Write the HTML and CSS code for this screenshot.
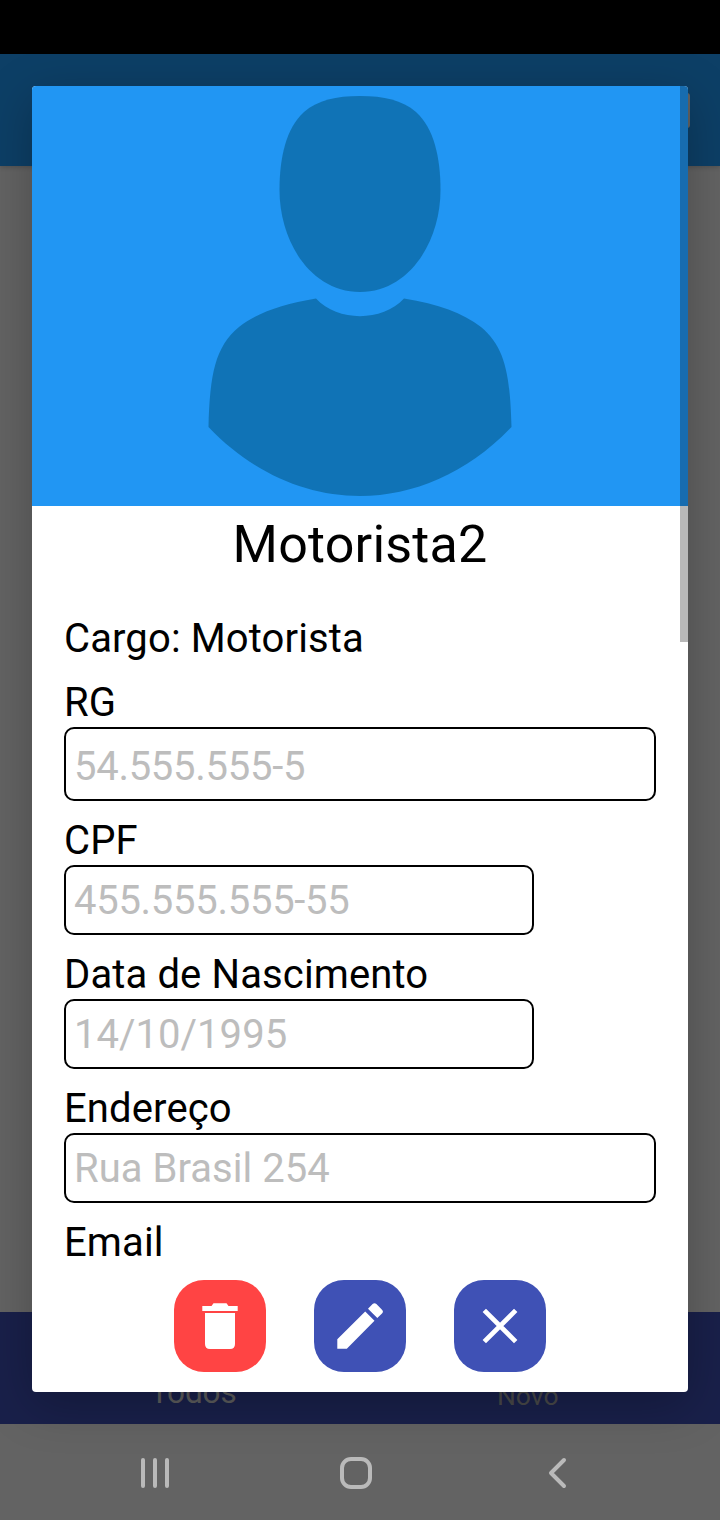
FILE: index.html
```html
<!DOCTYPE html>
<html lang="pt-BR">
<head>
<meta charset="utf-8">
<title>Motorista2</title>
<link rel="stylesheet" href="styles.css">
</head>
<body>
<div class="screen">
  <div class="status-bar"></div>
  <header class="app-bar"><span class="app-bar-action"></span></header>
  <main class="page"></main>
  <nav class="tabs">
    <span class="tab tab-active"><span class="tab-label">Todos</span></span>
    <span class="tab"><span class="tab-label">Novo</span></span>
  </nav>
  <footer class="system-nav">
    <svg class="system-icons" viewBox="0 0 720 96" fill="none" stroke="#bababa" stroke-width="4" stroke-linecap="round" stroke-linejoin="round">
      <path d="M143 36V62M155 36V62M167 36V62"/>
      <rect x="342" y="35" width="28" height="28" rx="9"/>
      <path d="M564 36L551 49L564 62"/>
    </svg>
  </footer>

  <section class="dialog">
    <div class="scroll">
      <div class="photo">
        <svg class="avatar" viewBox="0 0 304 400" fill="#1073b6">
          <path d="M152 0C176 0 194 4 208 16C226 32 232.500 62 232.500 94C232.500 146 201 196 152 196C103 196 71.500 146 71.500 94C71.500 62 78 32 96 16C110 4 128 0 152 0Z"/>
          <path d="M108 202.500C130 226 174 226 196 202.500C230 208 255 217 273 231C297 251 302 278 303.500 331C216 423 88 423 .5 331C2 278 7 251 31 231C49 217 74 208 108 202.500Z"/>
        </svg>
      </div>
      <h1 class="name">Motorista2</h1>
      <div class="form">
        <p class="label">Cargo: Motorista</p>
        <div class="field"><p class="label">RG</p><div class="input input-tall input-number">54.555.555-5</div></div>
        <div class="field"><p class="label">CPF</p><div class="input input-short input-number">455.555.555-55</div></div>
        <div class="field"><p class="label">Data de Nascimento</p><div class="input input-short">14/10/1995</div></div>
        <div class="field"><p class="label">Endereço</p><div class="input">Rua Brasil 254</div></div>
        <div class="field"><p class="label">Email</p></div>
      </div>
    </div>
    <div class="actions">
      <button class="action action-delete" aria-label="Excluir">
        <svg class="icon" viewBox="0 0 92 92" fill="#fff"><path d="M31 33H61V64Q61 69 56 69H36Q31 69 31 64ZM28.300 26H37.500L39.500 23.200H52.500L54.500 26H63.700V31H28.300Z"/></svg>
      </button>
      <button class="action" aria-label="Editar">
        <svg class="icon" viewBox="0 0 92 92" fill="#fff"><path d="M23.300 59.300L51.200 31.500L60.500 40.800L32.800 68.800H23.300ZM54 28.700L58.600 24.100Q60.500 22.300 62.400 24.100L68 29.700Q69.900 31.600 68 33.500L63.300 38.100Z"/></svg>
      </button>
      <button class="action" aria-label="Fechar">
        <svg class="icon" viewBox="0 0 92 92" fill="none" stroke="#fff" stroke-width="4.800"><path d="M30.300 30.400L61.700 61.600M61.700 30.400L30.300 61.600"/></svg>
      </button>
    </div>
    <div class="scrollbar"></div>
  </section>
</div>
</body>
</html>
```
FILE: styles.css
```css
* { box-sizing: border-box; }

body { margin: 0; }

.screen {
  position: relative;
  display: flex;
  flex-direction: column;
  width: 720px;
  height: 1520px;
  overflow: hidden;
  background: #636363;
  font-family: Roboto, sans-serif;
  color: #000;
}

.status-bar { height: 54px; background: #000; }

.app-bar {
  display: flex;
  align-items: center;
  justify-content: flex-end;
  height: 112px;
  padding-right: 30px;
  background: #0d3f66;
  box-shadow: 0 1px 5px rgba(0, 0, 0, .2);
}

.app-bar-action {
  width: 36px;
  height: 35px;
  border-radius: 3px;
  background: #636363;
}

.page { flex: 1; }

.tabs { display: flex; height: 112px; background: #19204a; }

.tab {
  flex: 1;
  display: flex;
  align-items: flex-end;
  justify-content: center;
  padding: 0 25px 12px 0;
  font-size: 26.5px;
  line-height: 32px;
  color: #484848;
}

.tab-active {
  padding: 0 0 12px 26px;
  font-size: 31.5px;
  line-height: 38px;
  letter-spacing: -.1px;
  color: #5c5c5c;
}

.system-nav { height: 96px; background: #636363; }

.system-icons { display: block; width: 720px; height: 96px; }

.dialog {
  position: absolute;
  top: 86px;
  left: 32px;
  width: 656px;
  height: 1306px;
  display: flex;
  flex-direction: column;
  overflow: hidden;
  border-radius: 4px;
  background: #fff;
  box-shadow: 0 12px 48px rgba(0, 0, 0, .25);
}

.scroll { flex: 1; overflow: hidden; }

.photo {
  display: flex;
  justify-content: center;
  padding: 10px 0;
  background: #2196f3;
}

.avatar { width: 304px; height: 400px; }

.name {
  margin: 7px 0 0;
  font-size: 52px;
  font-weight: 400;
  line-height: 64px;
  text-align: center;
  letter-spacing: .2px;
}

.form {
  display: flex;
  flex-direction: column;
  gap: 16px;
  padding: 38px 32px 0;
}

.label {
  margin: 0;
  font-size: 40px;
  line-height: 48px;
  letter-spacing: .13px;
}

.input {
  height: 70px;
  padding: 10px 8px 0;
  border: 2px solid #000;
  border-radius: 10px;
  font-size: 40px;
  line-height: 48px;
  letter-spacing: .03px;
  color: #bdbdbd;
}

.input-tall { height: 74px; padding-top: 14px; }

.input-short { width: 470px; }

.input-number { letter-spacing: -.28px; }

.actions {
  display: flex;
  justify-content: center;
  gap: 48px;
  padding-bottom: 20px;
}

.action {
  width: 92px;
  height: 92px;
  padding: 0;
  border: 0;
  border-radius: 30px;
  background: #3f51b5;
}

.action-delete { background: #ff4444; }

.icon { display: block; width: 92px; height: 92px; }

.scrollbar {
  position: absolute;
  top: 0;
  right: 0;
  width: 8px;
  height: 556px;
  background: rgba(0, 0, 0, .28);
}
```
